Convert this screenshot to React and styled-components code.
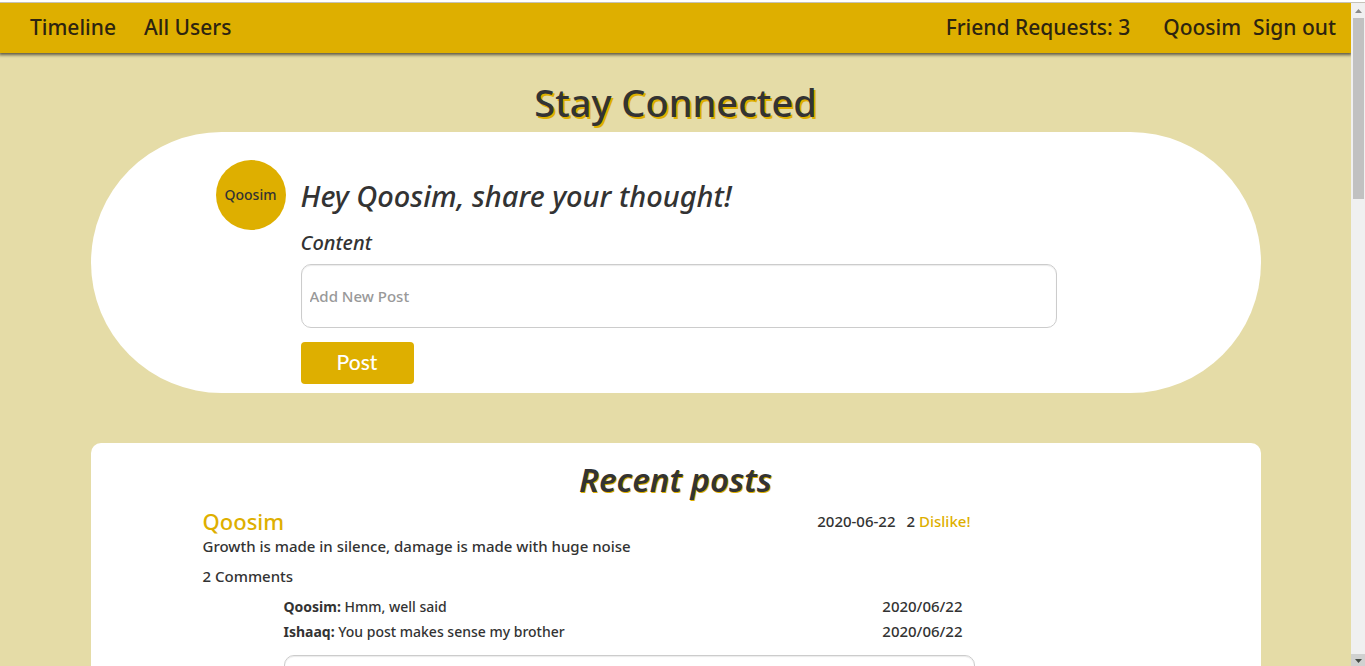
import React from 'react';
import styled, { createGlobalStyle } from 'styled-components';

const gold = '#deaf00';
const ink = '#333';

const GlobalStyle = createGlobalStyle`
  *, *::before, *::after { box-sizing: border-box; }
  body {
    margin: 0;
    background: #e5dca7;
    color: ${ink};
    font: 500 15px/25px "Noto Sans", "Open Sans", sans-serif;
  }
  a { color: inherit; text-decoration: none; }
  h1, h2, h3, p, ul { margin: 0; padding: 0; }
`;

const Window = styled.div`
  display: flex;
  flex-direction: column;
  height: 100vh;
  overflow: hidden;
  border-top: 2px solid #fff;
`;

const Body = styled.div`
  display: flex;
  flex: 1;
  min-height: 0;
  border-top: 1px solid #c5c2b8;
`;

const Content = styled.div`
  flex: 1;
  min-width: 0;
  overflow: hidden;
`;

const Nav = styled.nav`
  display: flex;
  justify-content: space-between;
  align-items: center;
  height: 50px;
  padding: 0 15px 2px 30px;
  background: ${gold};
  box-shadow: 0 1px 3px 1px rgba(0, 0, 0, 0.6);
  color: #2d2410;
  font-size: 21px;
`;

const NavGroup = styled.div`
  display: flex;
  gap: ${({ $gap }) => $gap}px;
`;

const Container = styled.main`
  max-width: 1170px;
  margin: 0 auto;
`;

const Title = styled.h1`
  padding: 22px 0 3px;
  font-size: 38px;
  font-weight: 500;
  line-height: 54px;
  text-align: center;
  text-shadow: 2px 2px 0 ${gold};
`;

const Composer = styled.section`
  display: flex;
  gap: 15px;
  padding: 28px 204px 9px 125px;
  border-radius: 131px;
  background: #fff;
`;

const Avatar = styled.div`
  display: flex;
  flex: none;
  align-items: center;
  justify-content: center;
  width: 70px;
  height: 70px;
  padding-bottom: 2px;
  border-radius: 50%;
  background: ${gold};
  font-size: 14px;
`;

const Form = styled.form`
  display: flex;
  flex: 1;
  flex-direction: column;
  align-items: flex-start;
  min-width: 0;
`;

const Greeting = styled.h2`
  padding-top: 16px;
  font-size: 29px;
  font-style: italic;
  font-weight: 500;
  line-height: 40px;
`;

const Label = styled.label`
  margin: 13px 0 7px;
  font-size: 20px;
  font-style: italic;
  line-height: 28px;
`;

const Field = styled.input`
  width: 100%;
  height: 64px;
  padding: 0 8px;
  border: 1px solid #ccc;
  border-radius: 10px;
  background: #fff;
  box-shadow: inset 0 1px 1px rgba(0, 0, 0, 0.08);
  color: ${ink};
  font: inherit;
  &::placeholder { color: #999; opacity: 1; }
`;

const Button = styled.button`
  width: 113px;
  height: 42px;
  margin-top: 14px;
  padding: 0 0 2px;
  border: 0;
  border-radius: 4px;
  background: ${gold};
  color: #fff;
  font: 500 21px/40px Lato, sans-serif;
`;

const Posts = styled.section`
  margin-top: 50px;
  padding: 16px 112px 40px;
  border-radius: 10px;
  background: #fff;
`;

const PostsTitle = styled.h2`
  font-size: 33px;
  font-style: italic;
  font-weight: 600;
  line-height: 42px;
  text-align: center;
  text-shadow: 1px 1px 0 ${gold};
`;

const Post = styled.article`
  max-width: 772px;
  padding-top: 8px;
`;

const PostHeader = styled.header`
  display: flex;
  align-items: center;
  justify-content: space-between;
  padding-right: 4px;
`;

const Author = styled.h3`
  color: ${gold};
  font-size: 22px;
  font-weight: 500;
  line-height: 25px;
`;

const Meta = styled.div`
  display: flex;
  gap: 11px;
`;

const Dislike = styled.a`
  && { color: ${gold}; }
`;

const CommentCount = styled.p`
  margin: 5px 0;
`;

const Comments = styled.div`
  padding-left: 81px;
`;

const CommentList = styled.ul`
  list-style: none;
  margin-bottom: 11px;
  padding-right: 12px;
`;

const Comment = styled.li`
  display: flex;
  justify-content: space-between;
`;

const CommentText = styled.span`
  font-size: 14px;
`;

const Scrollbar = styled.div`
  display: flex;
  flex: none;
  flex-direction: column;
  align-items: center;
  justify-content: space-between;
  width: 14px;
  background: #f0f0f0;
`;

const ScrollTop = styled.div`
  display: flex;
  flex-direction: column;
  align-items: center;
`;

const Thumb = styled.div`
  width: 11px;
  height: 181px;
  margin-left: 1px;
  background: #c1c1c1;
`;

const Arrow = styled.svg`
  display: block;
  width: 14px;
  height: ${({ $height }) => $height}px;
  background: ${({ $bg }) => $bg};
`;

const comments = [
  { author: 'Qoosim', text: 'Hmm, well said', date: '2020/06/22' },
  { author: 'Ishaaq', text: 'You post makes sense my brother', date: '2020/06/22' },
];

export default function App() {
  return (
    <>
      <GlobalStyle />
      <Window>
        <Body>
          <Content>
            <Nav>
              <NavGroup $gap={28}>
                <a href="#timeline">Timeline</a>
                <a href="#users">All Users</a>
              </NavGroup>
              <NavGroup $gap={33}>
                <a href="#requests">Friend Requests: 3</a>
                <NavGroup $gap={12}>
                  <a href="#profile">Qoosim</a>
                  <a href="#signout">Sign out</a>
                </NavGroup>
              </NavGroup>
            </Nav>
            <Container>
              <Title>Stay Connected</Title>
              <Composer>
                <Avatar>Qoosim</Avatar>
                <Form onSubmit={(event) => event.preventDefault()}>
                  <Greeting>Hey Qoosim, share your thought!</Greeting>
                  <Label htmlFor="content">Content</Label>
                  <Field id="content" placeholder="Add New Post" />
                  <Button type="submit">Post</Button>
                </Form>
              </Composer>
              <Posts>
                <PostsTitle>Recent posts</PostsTitle>
                <Post>
                  <PostHeader>
                    <Author><a href="#qoosim">Qoosim</a></Author>
                    <Meta>
                      <time>2020-06-22</time>
                      <span>2 <Dislike href="#dislike">Dislike!</Dislike></span>
                    </Meta>
                  </PostHeader>
                  <p>Growth is made in silence, damage is made with huge noise</p>
                  <CommentCount>2 Comments</CommentCount>
                  <Comments>
                    <CommentList>
                      {comments.map(({ author, text, date }) => (
                        <Comment key={author}>
                          <CommentText><b>{author}:</b> {text}</CommentText>
                          <time>{date}</time>
                        </Comment>
                      ))}
                    </CommentList>
                    <Field aria-label="Add a comment" />
                  </Comments>
                </Post>
              </Posts>
            </Container>
          </Content>
          <Scrollbar aria-hidden="true">
            <ScrollTop>
              <Arrow $height={15} $bg="#f0f0f0" viewBox="0 0 14 15">
                <path d="M4 10 L7.5 6 L11 10 Z" fill="#8b8b8b" />
              </Arrow>
              <Thumb />
            </ScrollTop>
            <Arrow $height={12} $bg="#d0d1d0" viewBox="0 0 14 12">
              <path d="M4 5 H11 L7.5 9 Z" fill="#454b45" />
            </Arrow>
          </Scrollbar>
        </Body>
      </Window>
    </>
  );
}
